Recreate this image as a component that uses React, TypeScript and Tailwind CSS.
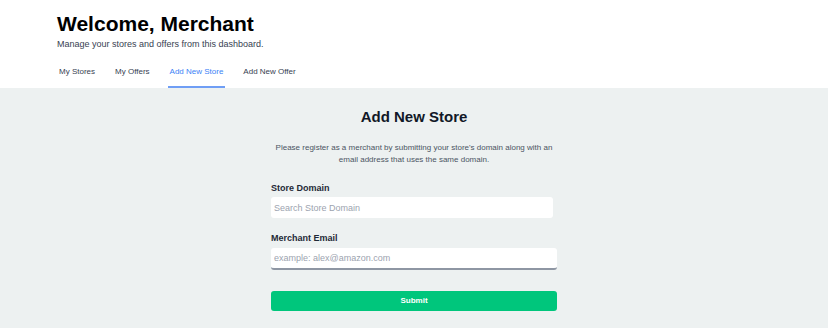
import React from 'react';

const tabs = ['My Stores', 'My Offers', 'Add New Store', 'Add New Offer'];

export default function App() {
  const active = 'Add New Store';

  return (
    <div className="min-h-[328px] bg-[#edf1f1] font-['Liberation_Sans',Arial,sans-serif]">
      <header className="bg-white pl-[57px] pt-[11px]">
        <h1 className="text-[21px] font-bold leading-[25px] text-black">Welcome, Merchant</h1>
        <p className="mt-[1px] text-[9px] leading-[14px] text-[#374151]">
          Manage your stores and offers from this dashboard.
        </p>
        <nav className="mt-[7px] flex gap-4">
          {tabs.map((t) => (
            <button
              key={t}
              className={
                t === active
                  ? 'flex h-[30px] items-center border-b-2 border-[#6f9ef5] px-0.5 text-[8px] text-[#3b82f6]'
                  : 'flex h-[30px] items-center border-b-2 border-transparent px-0.5 text-[8px] text-[#374151]'
              }
            >
              {t}
            </button>
          ))}
        </nav>
      </header>

      <main className="mx-auto w-[286px] pt-[19px] pb-4">
        <h2 className="text-center text-[15px] font-bold leading-[20px] text-[#111827]">Add New Store</h2>
        <p className="mt-[15px] text-center text-[8px] leading-[12px] text-[#4b5563]">
          Please register as a merchant by submitting your store's domain along with an email address that uses the same domain.
        </p>

        <form className="mt-[16px]" onSubmit={(e) => e.preventDefault()}>
          <label className="block text-[9px] font-bold leading-[12px] text-[#1f2937]">Store Domain</label>
          <input
            className="mt-[3px] block h-[21px] w-[282px] rounded-[3px] bg-white px-[3px] text-[9px] text-gray-700 placeholder-[#9ca3af] outline-none"
            placeholder="Search Store Domain"
          />

          <label className="mt-[14px] block text-[9px] font-bold leading-[12px] text-[#1f2937]">Merchant Email</label>
          <input
            className="mt-[4px] block h-[22px] w-full rounded-[3px] border-b-2 border-[#8e96a3] bg-white px-[3px] text-[9px] text-gray-700 placeholder-[#9ca3af] outline-none"
            placeholder="example: alex@amazon.com"
          />

          <button
            type="submit"
            className="mt-[21px] block h-[20px] w-full rounded-[3px] bg-[#00c67c] text-[8px] font-bold text-white"
          >
            Submit
          </button>
        </form>
      </main>
    </div>
  );
}
